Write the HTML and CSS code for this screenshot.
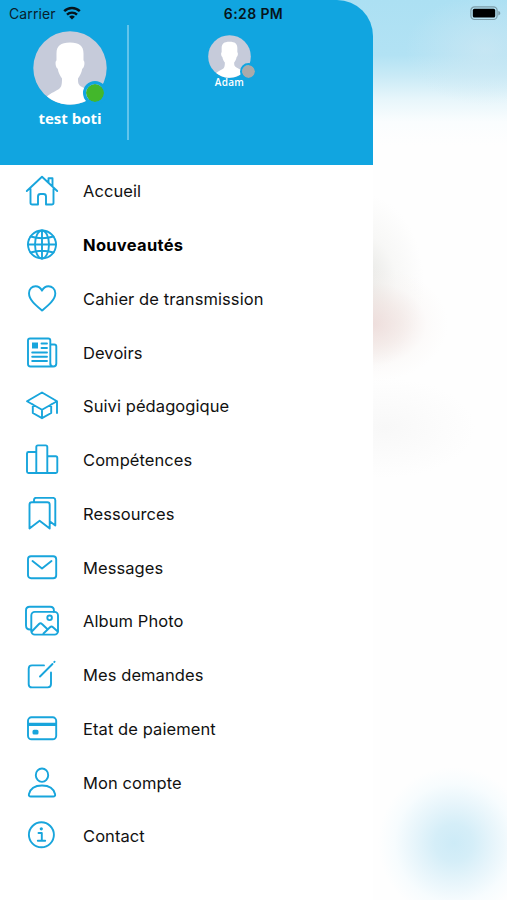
FILE: index.html
```html
<!DOCTYPE html>
<html lang="fr">

<head>
  <meta charset="UTF-8">
  <meta name="viewport" content="width=device-width, initial-scale=1.0">
  <title>Menu</title>
  <link rel="stylesheet" href="styles.css">
</head>

<body>
  <header class="status-bar">
    <div class="status-left">
      <span class="carrier">Carrier</span>
      <svg class="wifi" viewBox="0 0 18 14">
        <path d="M1.2 5.2a11 11 0 0 1 15.6 0M4 8.6a7.2 7.2 0 0 1 10 0"/>
        <path class="solid" d="M9 13.5 6.1 10.8a4.2 4.2 0 0 1 5.8 0z"/>
      </svg>
    </div>
    <span class="time">6:28 PM</span>
    <svg class="battery" viewBox="0 0 31 15">
      <rect class="shell" x=".9" y=".9" width="26.2" height="12.6" rx="3.6"/>
      <rect class="level" x="2.8" y="2.8" width="22.4" height="8.8" rx="1.6"/>
      <path class="cap" d="M28.3 5v4.4c1.2-.4 2-1.2 2-2.2s-.8-1.8-2-2.2z"/>
    </svg>
  </header>

  <main class="drawer">
    <section class="profiles">
      <div class="profile profile-main">
        <div class="avatar">
          <svg viewBox="0 0 74 74">
            <circle class="avatar-bg" cx="37" cy="37" r="36.7"/>
            <path class="avatar-body" d="M37 11.5c9.5 0 13.5 3.5 13.500 11v7c1.700.8 1 7-1.200 8.200-.8 4.300-2.500 7.300-4.300 9.800 0 4.500.2 6.500 4 8.500l9.500 5-3 7.500A36.700 36.700 0 0 1 14 65.500c3.500-3.500 9.500-5.500 12.500-8 2-1.700 2.500-4 2.500-10-1.800-2.500-3.500-5.500-4.300-9.800-2.200-1.200-2.900-7.400-1.200-8.200v-7c0-7.500 4-11 13.500-11z"/>
          </svg>
          <span class="status-dot online"></span>
        </div>
        <span class="profile-name">test boti</span>
      </div>

      <div class="profile profile-child">
        <div class="avatar">
          <svg viewBox="0 0 74 74">
            <circle class="avatar-bg" cx="37" cy="37" r="36.7"/>
            <path class="avatar-body" d="M37 11.5c9.5 0 13.500 3.500 13.500 11v7c1.700.8 1 7-1.200 8.200-.8 4.300-2.500 7.300-4.300 9.800 0 4.500.2 6.500 4 8.500l9.500 5-3 7.500A36.700 36.700 0 0 1 14 65.500c3.500-3.500 9.500-5.500 12.500-8 2-1.700 2.500-4 2.500-10-1.800-2.500-3.500-5.500-4.300-9.800-2.200-1.200-2.900-7.400-1.200-8.200v-7c0-7.500 4-11 13.500-11z"/>
          </svg>
          <span class="status-dot"></span>
        </div>
        <span class="profile-name">Adam</span>
      </div>
    </section>

    <nav class="menu">
      <a class="menu-item">
        <svg class="icon" viewBox="0 0 34 34"><path d="M1.800 17 17 2.800 32.200 17M5.500 14.500v14.200q0 1.800 1.800 1.800H13v-8q0-2.500 2.500-2.500h3q2.500 0 2.500 2.500v8h5.700q1.800 0 1.800-1.800V14.500M23.500 8.500V4.300h4V12.500"/></svg>
        <span>Accueil</span>
      </a>
      <a class="menu-item active">
        <svg class="icon" viewBox="0 0 34 34"><circle cx="17" cy="16.500" r="14"/><ellipse cx="17" cy="16.500" rx="7" ry="14"/><path d="M17 2.500v28M3 16.500h28M5.500 8.500q11.500 3.500 23 0M5.500 24.500q11.500-3.500 23 0"/></svg>
        <span>Nouveautés</span>
      </a>
      <a class="menu-item">
        <svg class="icon" viewBox="0 0 34 34"><path d="M17 28.500C11 23.500 4 18 4 11.200 4 7 7 4.200 10.500 4.200c3.200 0 5.200 1.800 6.500 4.500 1.300-2.700 3.300-4.500 6.500-4.500 3.500 0 6.800 2.800 6.800 7 0 6.800-7.300 12.300-13.300 17.300z"/></svg>
        <span>Cahier de transmission</span>
      </a>
      <a class="menu-item">
        <svg class="icon" viewBox="0 0 34 34"><path d="M25.300 28.500V4.500q0-2-2-2H5q-2 0-2 2v23.500q0 2.500 2.500 2.500h22.800q3 0 3-3V10.500q0-2-2-2h-4M25.300 27q0 3.500 3 3.500M16.500 7.500h5.500M16.500 12h5.500M7.200 16.500H22M7.200 20.700H22M7.200 25H22"/><path class="fill" d="M7 6.500h6v6H7z"/></svg>
        <span>Devoirs</span>
      </a>
      <a class="menu-item">
        <svg class="icon" viewBox="0 0 34 34"><path d="M2 12.200 17 3.500l15 8.700-15 8.600zM7.800 15.500v8.500l9.200 5.200 9.200-5.200v-8.500M17 20.800v8.400M32 12.200V24"/></svg>
        <span>Suivi pédagogique</span>
      </a>
      <a class="menu-item">
        <svg class="icon" viewBox="0 0 34 34"><path d="M11.300 30H3.500Q2 30 2 28.500v-18Q2 9 3.500 9h7.800M11.300 30V4q0-1.600 1.600-1.600h7.800q1.600 0 1.600 1.600v26zM22.300 13.300h8.400q1.600 0 1.600 1.600v13.600q0 1.500-1.500 1.500h-8.500"/></svg>
        <span>Compétences</span>
      </a>
      <a class="menu-item">
        <svg class="icon" viewBox="0 0 34 34"><path d="M4.500 31.500V7.700q0-2.400 2.400-2.400h15.400q2.400 0 2.400 2.400v23.800l-10.100-7.700zM9 5V3.200Q9 .9 11.300.9H28q2.300 0 2.300 2.300v25.300l-5.600-4.200"/></svg>
        <span>Ressources</span>
      </a>
      <a class="menu-item">
        <svg class="icon" viewBox="0 0 34 34"><rect x="3" y="5.300" width="28.200" height="22" rx="3"/><path d="m7.500 10 9.500 7.500 9.500-7.500"/></svg>
        <span>Messages</span>
      </a>
      <a class="menu-item">
        <svg class="icon" viewBox="0 0 34 34"><rect x="6.300" y="7.900" width="26.700" height="22.700" rx="3.500"/><path d="M6.300 25.500H5q-4 0-4-4V6.500q0-3.700 3.700-3.700h20.500q3.700 0 3.700 3.700v1.400M6.800 27.500l7.200-7.500q1.500-1.500 3 0l5.500 5.200M18.500 29.500l6.500-6.200q1.500-1.400 3 0l4.700 4.200"/><circle cx="24.600" cy="13.800" r="2.300"/></svg>
        <span>Album Photo</span>
      </a>
      <a class="menu-item">
        <svg class="icon" viewBox="0 0 34 34"><path d="M19 7.400H7q-3.300 0-3.300 3.300v15.500q0 3.200 3.300 3.200h15.700q3.300 0 3.300-3.300V14.500M15 18.500 27.500 6M29.300 4l.3-.3"/></svg>
        <span>Mes demandes</span>
      </a>
      <a class="menu-item">
        <svg class="icon" viewBox="0 0 34 34"><rect x="3" y="5.300" width="28.200" height="22" rx="3.500"/><path class="fill" d="M3 10.700h28v3.200H3zM9 17.800h3q1.500 0 1.500 1.500v1.800q0 1.500-1.500 1.500H9q-1.500 0-1.500-1.500v-1.800q0-1.500 1.500-1.500z"/></svg>
        <span>Etat de paiement</span>
      </a>
      <a class="menu-item">
        <svg class="icon" viewBox="0 0 34 34"><ellipse cx="17" cy="9.200" rx="6.200" ry="6.700"/><path d="M5.800 30.500h22.400q2.300 0 1.900-2.200C28.800 22.500 23.500 19.500 17 19.500S5.200 22.500 3.900 28.300q-.4 2.200 1.900 2.200z"/></svg>
        <span>Mon compte</span>
      </a>
      <a class="menu-item">
        <svg class="icon" viewBox="0 0 34 34"><circle cx="16.400" cy="15.800" r="12.500"/><path d="M13.500 14h3.300v7.500M12.800 21.700h7.400"/><circle class="fill" cx="16.300" cy="9.800" r="1.600"/></svg>
        <span>Contact</span>
      </a>
    </nav>
  </main>
</body>

</html>
```

FILE: styles.css
```css
/* ---- General ---- */

:root {
  --blue: #11a5e0;
  --iconBlue: #18a5dc;
}

body {
  position: relative;
  height: 900px;
  margin: 0;
  overflow: hidden;
  font-family: "Inter", sans-serif;
  color: #111;
  /* blurred page behind the drawer */
  background-color: #fefefe;
  background-image:
    radial-gradient(circle 76px at 454px 843px, #cdebf7 0%, #d5eef8 25%, #e7f5fb 52%, #f7fcfe 78%, transparent 100%),
    radial-gradient(ellipse 76px 58px at 372px 324px, rgba(236, 216, 214, .8) 0%, rgba(240, 226, 223, .6) 40%, rgba(248, 243, 241, .3) 72%, transparent 100%),
    radial-gradient(ellipse 62px 90px at 362px 284px, rgba(222, 222, 218, .8) 0%, rgba(238, 238, 235, .4) 55%, transparent 100%),
    radial-gradient(ellipse 90px 50px at 385px 428px, #f8f8f8 0%, transparent 100%),
    radial-gradient(ellipse 80px 55px at 485px 50px, rgba(207, 232, 243, .7) 0%, transparent 100%),
    linear-gradient(#ace0f3 0, #b2e2f4 55px, #c8eaf6 75px, #e8f6fb 100px, #fafdfe 122px, #fefefe 145px);
}

/* ---- Status bar ---- */

.status-bar {
  position: absolute;
  z-index: 2;
  top: 0;
  left: 0;
  display: grid;
  grid-template-columns: 1fr auto 1fr;
  align-items: center;
  box-sizing: border-box;
  width: 100%;
  height: 27px;
  padding: 0 6px 0 9px;
  color: #08202c;
  font-size: 14px;
}

.status-left {
  display: flex;
  align-items: center;
  gap: 7px;
}

.carrier {
  letter-spacing: .1px;
}

.wifi {
  width: 18px;
  height: 14px;
  margin-top: -2px;
  fill: none;
  stroke: #06141b;
  stroke-width: 2.4;
}

.wifi .solid {
  fill: #06141b;
  stroke: none;
}

.time {
  margin-right: 3px;
  color: #06141b;
  font-weight: 600;
  letter-spacing: .4px;
}

.battery {
  justify-self: end;
  width: 31px;
  height: 15px;
}

.shell {
  fill: none;
  stroke: #7c9ca8;
  stroke-width: 1.2;
}

.cap {
  fill: #7c9ca8;
}

/* ---- Drawer ---- */

.drawer {
  width: 372.5px;
  height: 900px;
  background: linear-gradient(transparent 100px, #fff 100px);
}

.profiles {
  display: flex;
  align-items: flex-start;
  box-sizing: border-box;
  height: 164.5px;
  padding-top: 25px;
  border-top-right-radius: 36px;
  background: var(--blue);
}

.profile {
  display: flex;
  flex-direction: column;
  align-items: center;
  color: #fff;
}

.profile-main {
  box-sizing: border-box;
  width: 129px;
  height: 115px;
  padding: 6px 0 0 13px;
  border-right: 2px solid #62c4eb;
}

.profile-child {
  margin-left: 79px;
  padding-top: 10px;
}

.avatar {
  position: relative;
  width: 74px;
  height: 74px;
}

.avatar svg {
  display: block;
  width: 100%;
  height: 100%;
}

.avatar-bg {
  fill: #c6cbda;
}

.avatar-body {
  fill: #fff;
}

.status-dot {
  position: absolute;
  right: 0;
  bottom: 0;
  width: 18px;
  height: 18px;
  border: 3px solid var(--blue);
  border-radius: 50%;
  background: #aaa;
  background-clip: padding-box;
}

.online {
  background-color: #43b72b;
}

.profile-name {
  margin-top: 3px;
  font-family: "Open Sans", sans-serif;
  font-size: 15px;
  font-weight: 700;
  line-height: 20px;
}

.profile-child .avatar {
  width: 43px;
  height: 43px;
}

.profile-child .status-dot {
  right: -6px;
  bottom: -2px;
  width: 13px;
  height: 13px;
  border-width: 2px;
}

.profile-child .profile-name {
  margin-top: -2px;
  font-size: 10px;
  font-weight: 600;
  line-height: 13px;
  letter-spacing: .3px;
}

/* ---- Menu ---- */

.menu {
  display: flex;
  flex-direction: column;
}

.menu-item {
  display: flex;
  align-items: center;
  gap: 24px;
  height: 53.75px;
  padding-left: 25px;
  font-size: 16.5px;
  letter-spacing: .08px;
}

.active {
  color: #000;
  font-weight: 700;
  letter-spacing: .3px;
}

.icon {
  flex: none;
  width: 34px;
  height: 34px;
  fill: none;
  stroke: var(--iconBlue);
  stroke-width: 1.9;
  stroke-linecap: round;
  stroke-linejoin: round;
}

.icon .fill {
  fill: var(--iconBlue);
  stroke: none;
}
```
